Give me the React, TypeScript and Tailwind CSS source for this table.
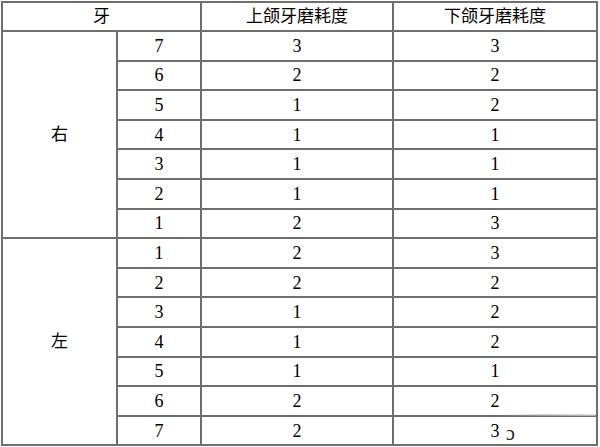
const rows = [
  { side: '右', tooth: '7', upper: '3', lower: '3' },
  { side: '右', tooth: '6', upper: '2', lower: '2' },
  { side: '右', tooth: '5', upper: '1', lower: '2' },
  { side: '右', tooth: '4', upper: '1', lower: '1' },
  { side: '右', tooth: '3', upper: '1', lower: '1' },
  { side: '右', tooth: '2', upper: '1', lower: '1' },
  { side: '右', tooth: '1', upper: '2', lower: '3' },
  { side: '左', tooth: '1', upper: '2', lower: '3' },
  { side: '左', tooth: '2', upper: '2', lower: '2' },
  { side: '左', tooth: '3', upper: '1', lower: '2' },
  { side: '左', tooth: '4', upper: '1', lower: '2' },
  { side: '左', tooth: '5', upper: '1', lower: '1' },
  { side: '左', tooth: '6', upper: '2', lower: '2' },
  { side: '左', tooth: '7', upper: '2', lower: '3' },
];

const cell = 'bg-white flex items-center justify-center';

export default function App() {
  return (
    <div className="relative w-[600px] h-[447px] bg-white overflow-hidden">
      <div className="ml-[1px] mt-[1px] w-[597px] grid grid-cols-[113px_82px_190px_202px] grid-rows-[27px_repeat(14,27.6px)] gap-[2px] p-[2px] bg-[#6e6e6e] text-[18px] text-black leading-none font-['Liberation_Serif','Noto_Sans_CJK_SC',serif]">
        {/* header */}
        <div className={`${cell} col-span-2 text-[17px]`}>牙</div>
        <div className={`${cell} text-[17px]`}>上颌牙磨耗度</div>
        <div className={`${cell} text-[17px]`}>下颌牙磨耗度</div>

        {rows.map((r, i) => [
          i % 7 === 0 ? (
            <div key={`side-${i}`} className={`${cell} row-span-7 text-[17px]`}>
              {r.side}
            </div>
          ) : null,
          <div key={`t-${i}`} className={cell}>{r.tooth}</div>,
          <div key={`u-${i}`} className={cell}>{r.upper}</div>,
          <div key={`l-${i}`} className={cell}>{r.lower}</div>,
        ])}
      </div>

      {/* watermark smudge */}
      <div className="absolute left-[500px] top-[414px] w-[95px] h-[2px] bg-gradient-to-r from-transparent via-[#b8b8b8] to-[#d8d8d8] opacity-70" />
      <span className="absolute left-[506px] top-[423px] text-[20px] leading-none text-[#222] font-['Liberation_Serif',serif]">
        ɔ
      </span>
    </div>
  );
}
